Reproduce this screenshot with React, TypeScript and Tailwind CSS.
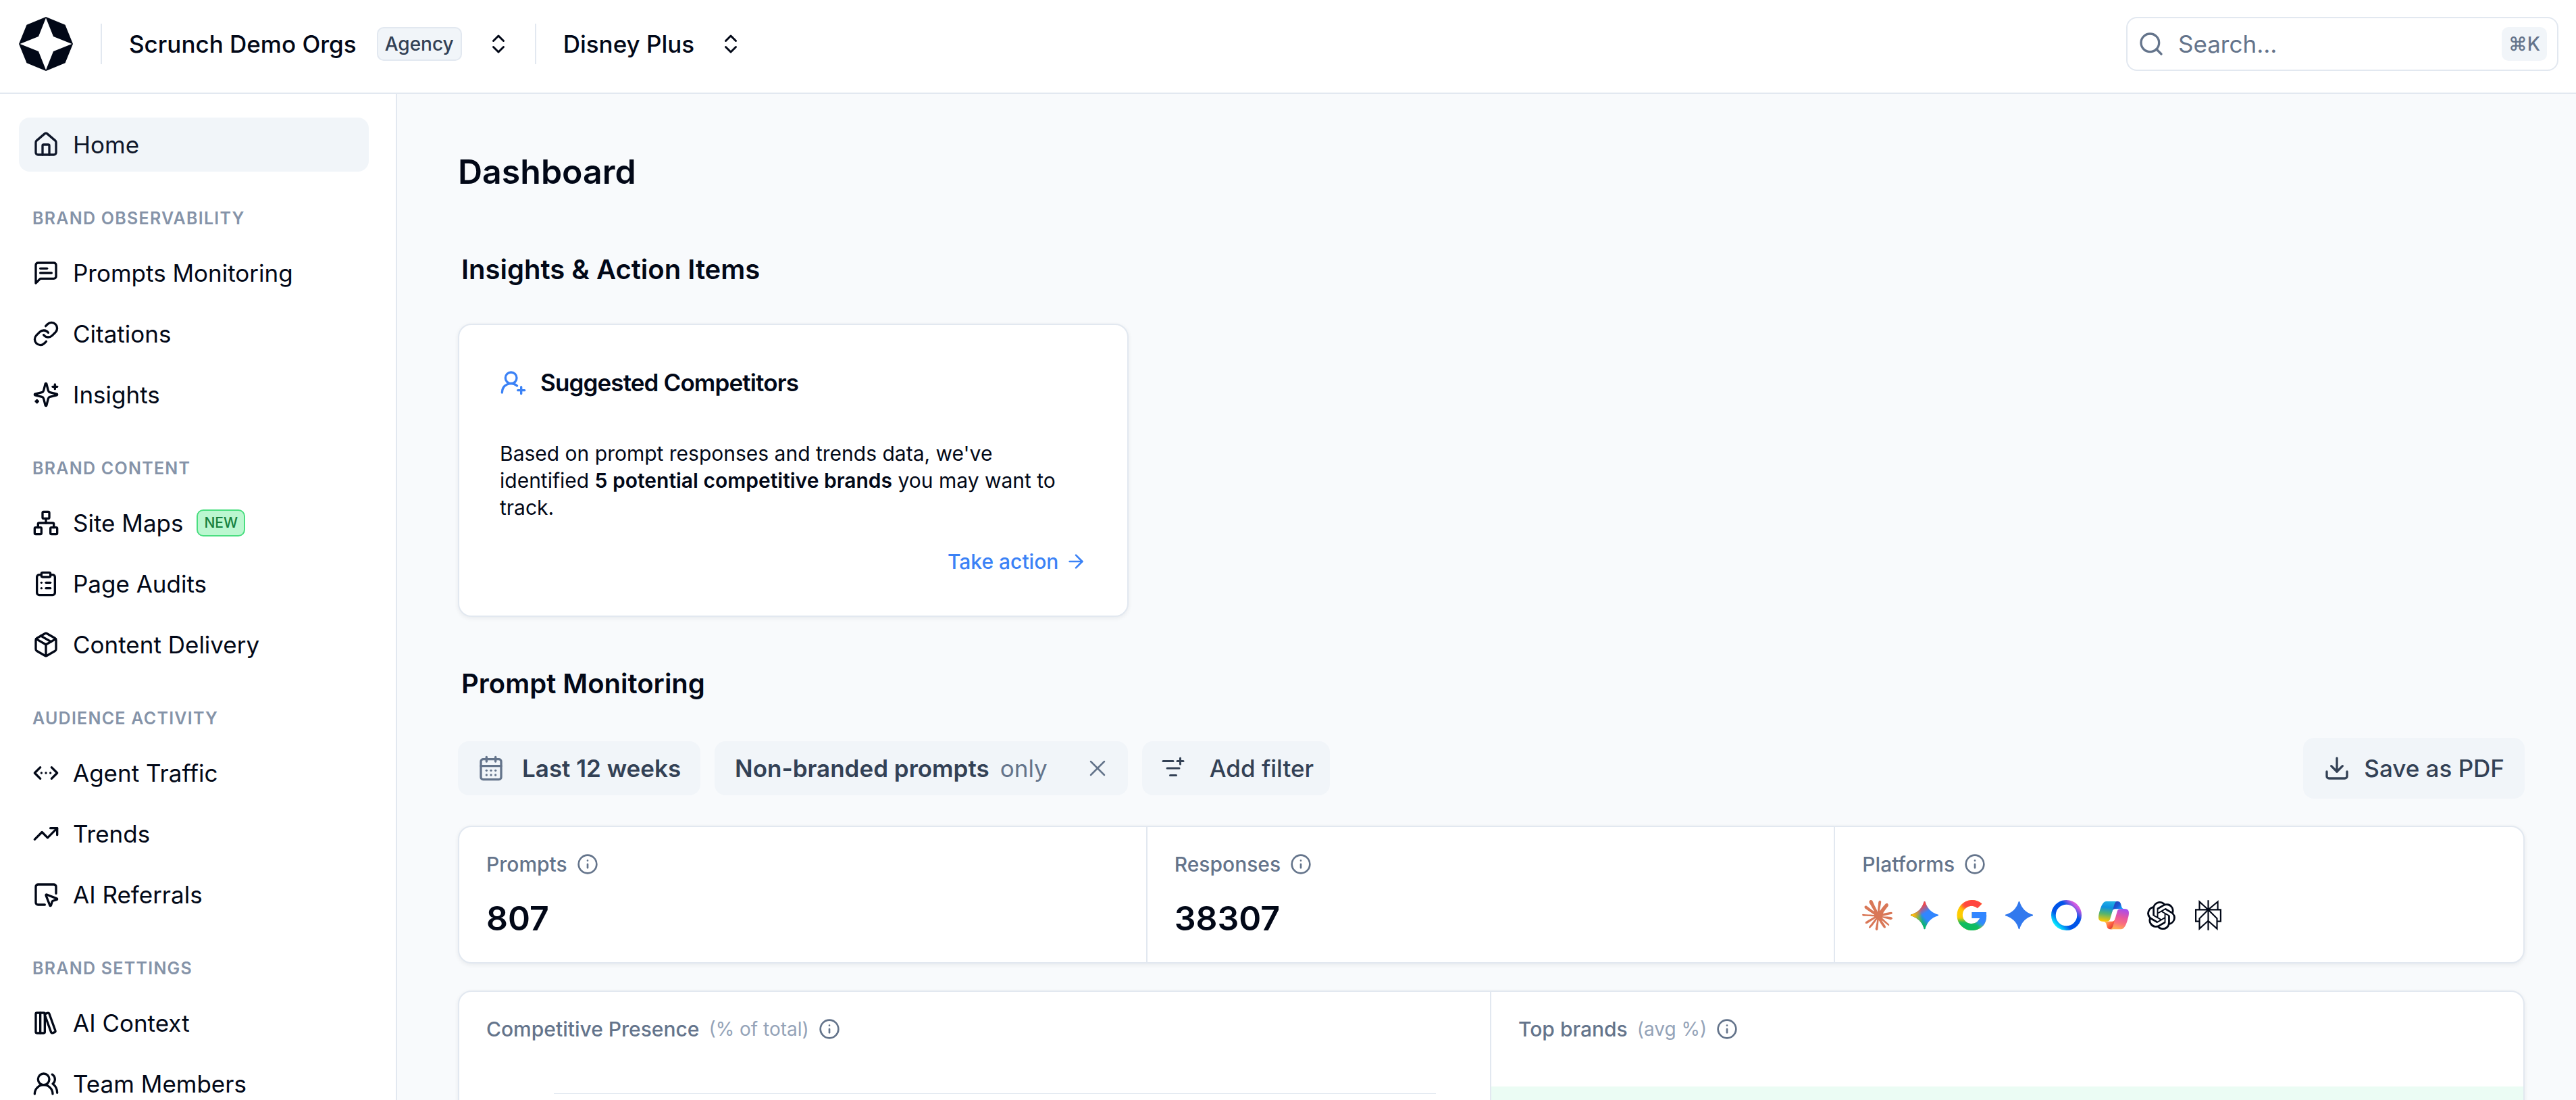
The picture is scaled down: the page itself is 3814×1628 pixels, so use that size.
import type { ComponentType, ReactNode } from "react";
import {
  ArrowRight,
  CalendarDays,
  ChevronsLeftRightEllipsis,
  ChevronsUpDown,
  ClipboardList,
  Download,
  House,
  Info,
  LibraryBig,
  Link,
  ListFilterPlus,
  Network,
  Package,
  Search,
  SquareMousePointer,
  TrendingUp,
  UserRoundPlus,
  UsersRound,
  X,
} from "lucide-react";
import { SiClaude, SiOpenai, SiPerplexity } from "react-icons/si";

type IconProps = { size?: number; className?: string };

const CARD = "rounded-[20px] border-2 border-slate-200 bg-white shadow-[0_2px_6px_rgba(15,23,42,0.07)]";

const STAR =
  "M20.616 10.835a14.147 14.147 0 01-4.45-3.001 14.111 14.111 0 01-3.678-6.452.503.503 0 00-.975 0 14.134 14.134 0 01-3.679 6.452 14.155 14.155 0 01-4.45 3.001c-.65.28-1.318.505-2.002.678a.502.502 0 000 .975c.684.172 1.35.397 2.002.677a14.147 14.147 0 014.45 3.001 14.112 14.112 0 013.679 6.453.502.502 0 00.975 0c.172-.685.397-1.351.677-2.003a14.145 14.145 0 013.001-4.45 14.113 14.113 0 016.453-3.678.503.503 0 000-.975 13.245 13.245 0 01-2.003-.678z";

function StrokeIcon({ size = 24, className, children }: IconProps & { children: ReactNode }) {
  return (
    <svg
      width={size}
      height={size}
      viewBox="0 0 24 24"
      fill="none"
      stroke="currentColor"
      strokeWidth="2"
      strokeLinecap="round"
      strokeLinejoin="round"
      className={className}
    >
      {children}
    </svg>
  );
}

function MessageLines(props: IconProps) {
  return (
    <StrokeIcon {...props}>
      <path d="M21 15a2 2 0 0 1-2 2H7l-4 4V5a2 2 0 0 1 2-2h14a2 2 0 0 1 2 2z" />
      <path d="M13 8H7" />
      <path d="M17 12H7" />
    </StrokeIcon>
  );
}

function SparklesPlus(props: IconProps) {
  return (
    <StrokeIcon {...props}>
      <path d="M9.937 15.5A2 2 0 0 0 8.5 14.063l-6.135-1.582a.5.5 0 0 1 0-.962L8.5 9.936A2 2 0 0 0 9.937 8.5l1.582-6.135a.5.5 0 0 1 .963 0L14.063 8.5A2 2 0 0 0 15.5 9.937l6.135 1.581a.5.5 0 0 1 0 .964L15.5 14.063a2 2 0 0 0-1.437 1.437l-1.582 6.135a.5.5 0 0 1-.963 0z" />
      <path d="M20 3v4" />
      <path d="M22 5h-4" />
      <path d="M4 17v2" />
      <path d="M5 18H3" />
    </StrokeIcon>
  );
}

function Logo() {
  return (
    <svg width="80" height="80" viewBox="0 0 80 80" role="img" aria-label="Scrunch">
      <path
        fill="#020817"
        fillRule="evenodd"
        d="M40 0 68.5 11.7 80 40 68.5 68.3 40 80 11.5 68.3 0 40 11.5 11.7ZM40 1.5 29 29 1.5 40 29 51 40 78.5 51 51 78.5 40 51 29Z"
      />
    </svg>
  );
}

function AiOverviews() {
  return (
    <svg width="45" height="45" viewBox="0 0 24 24">
      <defs>
        <linearGradient id="star-green" gradientUnits="userSpaceOnUse" x1="7" x2="11" y1="15.5" y2="12">
          <stop stopColor="#08B962" />
          <stop offset="1" stopColor="#08B962" stopOpacity="0" />
        </linearGradient>
        <linearGradient id="star-red" gradientUnits="userSpaceOnUse" x1="8" x2="11.5" y1="5.5" y2="11">
          <stop stopColor="#F94543" />
          <stop offset="1" stopColor="#F94543" stopOpacity="0" />
        </linearGradient>
        <linearGradient id="star-yellow" gradientUnits="userSpaceOnUse" x1="3.5" x2="17.5" y1="13.5" y2="12">
          <stop stopColor="#FABC12" />
          <stop offset=".46" stopColor="#FABC12" stopOpacity="0" />
        </linearGradient>
      </defs>
      <path d={STAR} fill="#3186FF" />
      <path d={STAR} fill="url(#star-green)" />
      <path d={STAR} fill="url(#star-red)" />
      <path d={STAR} fill="url(#star-yellow)" />
    </svg>
  );
}

function GoogleG() {
  return (
    <svg width="45" height="45" viewBox="0 0 24 24">
      <defs>
        <clipPath id="g-shape">
          <path d="M23.3 9.6H12v4.8h6.2A7 7 0 1 1 16.4 6.5L20 2.9A12 12 0 1 0 20.2 21C23 18.4 24 14.5 23.3 9.6Z" />
        </clipPath>
        <filter id="g-blur" x="-50%" y="-50%" width="200%" height="200%">
          <feGaussianBlur stdDeviation="1.3" />
        </filter>
      </defs>
      <g clipPath="url(#g-shape)">
        <rect width="24" height="24" fill="#FFCC00" />
        <g filter="url(#g-blur)">
          <path d="M3 -4H28V8H10L4 6Z" fill="#FF4641" />
          <path d="M-2 16 6 16 14 15 20 19 18 28H-2Z" fill="#0EBC5F" />
          <path d="M11 8H30V22H21L17 18 11 16Z" fill="#3186FF" />
        </g>
        <path d="M12 9.6H24V14.4H12Z" fill="#3186FF" />
      </g>
    </svg>
  );
}

function Gemini() {
  return (
    <svg width="45" height="45" viewBox="0 0 24 24">
      <path d={STAR} fill="#3279EE" />
    </svg>
  );
}

function MetaRing() {
  return (
    <svg width="45" height="45" viewBox="0 0 24 24">
      <defs>
        <linearGradient id="ring" gradientUnits="userSpaceOnUse" x1="4" y1="20" x2="20" y2="4">
          <stop stopColor="#08E8FF" />
          <stop offset=".28" stopColor="#0054E8" />
          <stop offset=".72" stopColor="#0054E8" />
          <stop offset=".98" stopColor="#D65CE0" />
        </linearGradient>
      </defs>
      <circle cx="12" cy="12" r="10.2" fill="none" stroke="url(#ring)" strokeWidth="3.6" />
    </svg>
  );
}

function Copilot() {
  return (
    <svg width="45" height="45" viewBox="0 0 24 24">
      <defs>
        <linearGradient id="cp-top" gradientUnits="userSpaceOnUse" x1="18" y1="7" x2="12" y2="1">
          <stop stopColor="#0FAFFF" />
          <stop offset=".5" stopColor="#1B57D6" />
          <stop offset="1" stopColor="#2A3DB0" />
        </linearGradient>
        <linearGradient id="cp-bottom" gradientUnits="userSpaceOnUse" x1="6" y1="16" x2="12" y2="22">
          <stop stopColor="#FFB657" />
          <stop offset=".5" stopColor="#FF5F3D" />
          <stop offset="1" stopColor="#C02B3C" />
        </linearGradient>
        <linearGradient id="cp-left" gradientUnits="userSpaceOnUse" x1="8" y1="0" x2="6" y2="16">
          <stop stopColor="#22B0E4" />
          <stop offset=".3" stopColor="#0D91E1" />
          <stop offset=".62" stopColor="#52B471" />
          <stop offset="1" stopColor="#FFC800" />
        </linearGradient>
        <linearGradient id="cp-right" gradientUnits="userSpaceOnUse" x1="19" y1="6" x2="15" y2="22">
          <stop stopColor="#A64DF0" />
          <stop offset=".4" stopColor="#E657A0" />
          <stop offset=".7" stopColor="#FA6F7C" />
          <stop offset="1" stopColor="#FFB04F" />
        </linearGradient>
      </defs>
      <g transform="translate(0 1)">
        <path
          d="M17.533 1.829A2.528 2.528 0 0015.11 0h-.737a2.531 2.531 0 00-2.484 2.087l-1.263 6.937.314-1.08a2.528 2.528 0 012.424-1.833h4.284l1.797.706 1.731-.706h-.505a2.528 2.528 0 01-2.423-1.829l-.715-2.453z"
          fill="url(#cp-top)"
        />
        <path
          d="M6.726 20.16A2.528 2.528 0 009.152 22h1.566c1.37 0 2.49-1.1 2.525-2.48l.17-6.69-.357 1.228a2.528 2.528 0 01-2.423 1.83h-4.32l-1.54-.842-1.667.843h.497c1.124 0 2.113.75 2.426 1.84l.697 2.432z"
          fill="url(#cp-bottom)"
        />
        <path
          d="M15 0H6.252c-2.5 0-4 3.331-5 6.662-1.184 3.947-2.734 9.225 1.75 9.225H6.78c1.13 0 2.12-.753 2.43-1.847.657-2.317 1.809-6.359 2.713-9.436.46-1.563.842-2.906 1.43-3.742A1.97 1.97 0 0115 0"
          fill="url(#cp-left)"
        />
        <path
          d="M9 22h8.749c2.5 0 4-3.332 5-6.663 1.184-3.948 2.734-9.227-1.75-9.227H17.22c-1.129 0-2.12.754-2.43 1.848a1149.2 1149.2 0 01-2.713 9.437c-.46 1.564-.842 2.907-1.43 3.743A1.97 1.97 0 019 22"
          fill="url(#cp-right)"
        />
      </g>
    </svg>
  );
}

const sections: { title: string; items: { label: string; icon: ComponentType<IconProps>; badge?: string }[] }[] = [
  {
    title: "BRAND OBSERVABILITY",
    items: [
      { label: "Prompts Monitoring", icon: MessageLines },
      { label: "Citations", icon: Link },
      { label: "Insights", icon: SparklesPlus },
    ],
  },
  {
    title: "BRAND CONTENT",
    items: [
      { label: "Site Maps", icon: Network, badge: "NEW" },
      { label: "Page Audits", icon: ClipboardList },
      { label: "Content Delivery", icon: Package },
    ],
  },
  {
    title: "AUDIENCE ACTIVITY",
    items: [
      { label: "Agent Traffic", icon: ChevronsLeftRightEllipsis },
      { label: "Trends", icon: TrendingUp },
      { label: "AI Referrals", icon: SquareMousePointer },
    ],
  },
  {
    title: "BRAND SETTINGS",
    items: [
      { label: "AI Context", icon: LibraryBig },
      { label: "Team Members", icon: UsersRound },
    ],
  },
];

function Header() {
  return (
    <header className="flex shrink-0 items-center justify-between border-b-2 border-slate-200 bg-white pt-[25px] pr-[26px] pb-8 pl-7">
      <div className="flex items-center">
        <a href="#" className="mr-[41px]">
          <Logo />
        </a>
        <div className="h-[60px] w-0.5 bg-slate-200" />
        <button className="flex items-center pr-9 pl-10 font-medium">
          Scrunch Demo Orgs
          <span className="ml-[30px] flex h-[50px] items-center rounded-[10px] border-2 border-slate-200 bg-slate-100 px-2.5 text-[28px] text-[#334155]">
            Agency
          </span>
          <ChevronsUpDown size={36} className="ml-9" />
        </button>
        <div className="h-[60px] w-0.5 bg-slate-200" />
        <button className="flex items-center pr-9 pl-10 font-medium">
          Disney Plus
          <ChevronsUpDown size={36} className="ml-9" />
        </button>
      </div>
      <label className="flex h-20 w-[640px] items-center rounded-2xl border-2 border-slate-200 px-[15px] text-[#64748b]">
        <Search size={40} className="shrink-0" />
        <input
          type="text"
          aria-label="Search"
          placeholder="Search..."
          className="ml-5 min-w-0 flex-1 bg-transparent outline-none placeholder:text-[#64748b]"
        />
        <kbd className="flex h-[50px] items-center rounded-[10px] bg-slate-100 px-2.5 font-['Inter',sans-serif] text-[28px] font-medium">
          ⌘K
        </kbd>
      </label>
    </header>
  );
}

function Sidebar() {
  return (
    <nav className="w-[588px] shrink-0 overflow-hidden border-r-2 border-slate-200 bg-white pt-[35px] pr-10 pl-7">
      <a href="#" className="flex h-20 items-center gap-5 rounded-2xl bg-slate-100 px-5 text-[#0f172a]">
        <House size={40} />
        Home
      </a>
      {sections.map((section) => (
        <div key={section.title}>
          <h3 className="mt-[51px] mb-[23px] px-5 text-[25px] leading-9 font-semibold tracking-wider text-[#8593a8]">
            {section.title}
          </h3>
          <ul className="flex flex-col gap-2.5">
            {section.items.map(({ label, icon: Icon, badge }) => (
              <li key={label}>
                <a href="#" className="flex h-20 items-center gap-5 px-5">
                  <Icon size={40} />
                  {label}
                  {badge && (
                    <span className="flex h-10 items-center rounded-[10px] border-2 border-[#4ade80] bg-[#bbf7d0] px-[9px] text-[21px] font-medium text-[#15803d]">
                      {badge}
                    </span>
                  )}
                </a>
              </li>
            ))}
          </ul>
        </div>
      ))}
    </nav>
  );
}

function CellTitle({ title, note }: { title: string; note?: string }) {
  return (
    <div className="flex h-9 items-center gap-3.5 text-[30px] font-medium text-[#64748b]">
      {title}
      {note && <span className="text-[28px] font-normal text-[#94a3b8]">{note}</span>}
      <Info size={32} />
    </div>
  );
}

export default function App() {
  return (
    <div className="flex h-screen flex-col overflow-hidden bg-[#f8fafc] font-['Inter',sans-serif] text-[35px] leading-[48px] text-[#020817]">
      <Header />
      <div className="flex min-h-0 flex-1">
        <Sidebar />
        <main className="min-w-0 flex-1 overflow-hidden pt-[85px] pr-[76px] pl-[90px]">
          <h1 className="text-[50px] leading-[60px] font-semibold">Dashboard</h1>

          <h2 className="mt-[91px] mb-14 pl-[5px] text-[40px] font-semibold">Insights &amp; Action Items</h2>
          <div className="grid grid-cols-3 gap-10">
            <section className={`${CARD} p-[60px]`}>
              <div className="flex h-[50px] items-center gap-5">
                <UserRoundPlus size={40} className="text-[#3b82f6]" />
                <h3 className="font-semibold tracking-tight">Suggested Competitors</h3>
              </div>
              <p className="mt-[60px] pr-5 text-[30px] leading-10">
                Based on prompt responses and trends data, we've identified{" "}
                <strong className="font-semibold">5 potential competitive brands</strong> you may want to track.
              </p>
              <div className="mt-10 flex justify-end">
                <a href="#" className="flex items-center gap-2.5 text-[30px] leading-10 font-medium text-[#3b82f6]">
                  Take action
                  <ArrowRight size={32} />
                </a>
              </div>
            </section>
          </div>

          <h2 className="mt-[75px] mb-14 pl-[5px] text-[40px] font-semibold">Prompt Monitoring</h2>
          <div className="flex items-center gap-[21px] text-[#334155]">
            <button className="flex h-20 items-center gap-[26px] rounded-2xl bg-slate-100 px-[29px] font-semibold">
              <CalendarDays size={40} className="text-[#64748b]" />
              Last 12 weeks
            </button>
            <div className="flex h-20 items-center rounded-2xl bg-slate-100 pr-[25px] pl-[30px]">
              <span className="font-semibold">Non-branded prompts</span>
              <span className="ml-4 text-[#64748b]">only</span>
              <button aria-label="Remove filter" className="ml-[54px] text-[#64748b]">
                <X size={40} strokeWidth={1.5} />
              </button>
            </div>
            <button className="flex h-20 items-center gap-9 rounded-2xl bg-slate-100 pr-6 pl-7 font-medium">
              <ListFilterPlus size={36} />
              Add filter
            </button>
            <button className="ml-auto flex h-[90px] items-center gap-5 rounded-2xl bg-slate-100 px-[30px] font-medium">
              <Download size={40} />
              Save as PDF
            </button>
          </div>

          <section className={`${CARD} mt-10 grid grid-cols-3`}>
            <div className="border-r-2 border-slate-200 px-10 pt-[37px] pb-[35px]">
              <CellTitle title="Prompts" />
              <p className="mt-8 text-[50px] leading-[60px] font-semibold">807</p>
            </div>
            <div className="border-r-2 border-slate-200 px-10 pt-[37px] pb-[35px]">
              <CellTitle title="Responses" />
              <p className="mt-8 text-[50px] leading-[60px] font-semibold">38307</p>
            </div>
            <div className="px-10 pt-[37px] pb-[35px]">
              <CellTitle title="Platforms" />
              <div className="mt-[35px] flex items-center gap-[25px]">
                <SiClaude size={45} className="text-[#d97757]" />
                <AiOverviews />
                <GoogleG />
                <Gemini />
                <MetaRing />
                <Copilot />
                <span className="flex size-[45px] items-center justify-center">
                  <SiOpenai size={42} />
                </span>
                <SiPerplexity size={45} />
              </div>
            </div>
          </section>

          <section className={`${CARD} mt-10 grid grid-cols-2`}>
            <div className="border-r-2 border-slate-200 pt-[37px] pb-10">
              <div className="px-10">
                <CellTitle title="Competitive Presence" note="(% of total)" />
              </div>
              {/* top grid line of the presence chart */}
              <div className="mt-[77px] mr-20 ml-[140px] h-[400px] border-t border-slate-200" />
            </div>
            <div className="pt-[37px] pb-10">
              <div className="px-10">
                <CellTitle title="Top brands" note="(avg %)" />
              </div>
              <div className="mt-[67px] h-20 bg-[#ebfcf4]" />
            </div>
          </section>
        </main>
      </div>
    </div>
  );
}
